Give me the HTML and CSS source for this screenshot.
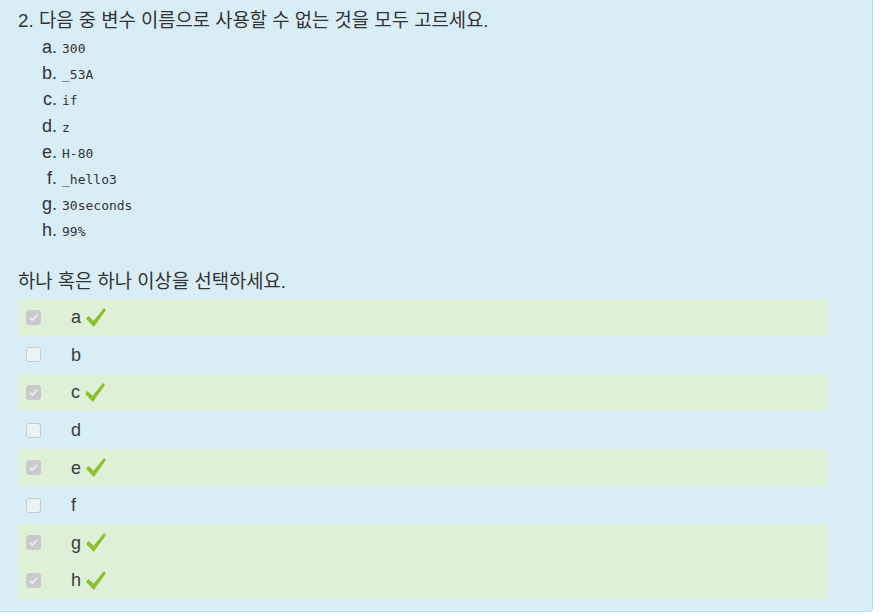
FILE: index.html
```html
<!DOCTYPE html>
<html lang="ko">
<head>
<meta charset="utf-8">
<title>Question 2</title>
<link rel="stylesheet" href="styles.css">
</head>
<body>
<div class="que">
  <div class="qtext">
    <p class="qline">2. 다음 중 변수 이름으로 사용할 수 없는 것을 모두 고르세요.</p>
    <ol class="opts">
      <li><code>300</code></li>
      <li><code>_53A</code></li>
      <li><code>if</code></li>
      <li><code>z</code></li>
      <li><code>H-80</code></li>
      <li><code>_hello3</code></li>
      <li><code>30seconds</code></li>
      <li><code>99%</code></li>
    </ol>
  </div>
  <div class="prompt">하나 혹은 하나 이상을 선택하세요.</div>
  <div class="answer">
    <div class="row correct"><span class="cb on"><svg viewBox="0 0 16 16"><path d="M3.5 8.2 L6.6 11.2 L12.5 4.8" /></svg></span><span class="lbl">a</span><svg class="tick" viewBox="0 0 20 20"><path d="M0 11.2 L2.6 8.6 L7.6 13.2 L18 0.6 L20 2.6 L7.8 19.4 Z"/></svg></div>
    <div class="row"><span class="cb"></span><span class="lbl">b</span></div>
    <div class="row correct"><span class="cb on"><svg viewBox="0 0 16 16"><path d="M3.5 8.2 L6.6 11.2 L12.5 4.8" /></svg></span><span class="lbl">c</span><svg class="tick" viewBox="0 0 20 20"><path d="M0 11.2 L2.6 8.6 L7.6 13.2 L18 0.6 L20 2.6 L7.8 19.4 Z"/></svg></div>
    <div class="row"><span class="cb"></span><span class="lbl">d</span></div>
    <div class="row correct"><span class="cb on"><svg viewBox="0 0 16 16"><path d="M3.5 8.2 L6.6 11.2 L12.5 4.8" /></svg></span><span class="lbl">e</span><svg class="tick" viewBox="0 0 20 20"><path d="M0 11.2 L2.6 8.6 L7.6 13.2 L18 0.6 L20 2.6 L7.8 19.4 Z"/></svg></div>
    <div class="row"><span class="cb"></span><span class="lbl">f</span></div>
    <div class="row correct"><span class="cb on"><svg viewBox="0 0 16 16"><path d="M3.5 8.2 L6.6 11.2 L12.5 4.8" /></svg></span><span class="lbl">g</span><svg class="tick" viewBox="0 0 20 20"><path d="M0 11.2 L2.6 8.6 L7.6 13.2 L18 0.6 L20 2.6 L7.8 19.4 Z"/></svg></div>
    <div class="row correct"><span class="cb on"><svg viewBox="0 0 16 16"><path d="M3.5 8.2 L6.6 11.2 L12.5 4.8" /></svg></span><span class="lbl">h</span><svg class="tick" viewBox="0 0 20 20"><path d="M0 11.2 L2.6 8.6 L7.6 13.2 L18 0.6 L20 2.6 L7.8 19.4 Z"/></svg></div>
  </div>
</div>
</body>
</html>
```

FILE: styles.css
```css
html, body {
  margin: 0;
  padding: 0;
  background: #ffffff;
}
body {
  font-family: "Liberation Sans", Arial, "Noto Sans CJK KR", sans-serif;
  font-size: 18px;
  color: #333333;
}
.que {
  box-sizing: border-box;
  width: 873px;
  height: 612px;
  background: #d9edf7;
  border-right: 1px solid #b3e0ef;
  border-bottom: 1px solid #b3e0ef;
  border-bottom-right-radius: 4px;
  padding: 0 0 0 18px;
  display: flex;
  flex-direction: column;
}
.qtext {
  padding-top: 8px;
}
.qline {
  margin: 0;
  font-size: 18.8px;
  line-height: 26px;
}
.opts {
  list-style-type: lower-alpha;
  margin: 0;
  padding: 0 0 0 44px;
}
.opts li {
  line-height: 26.2px;
  height: 26.2px;
}
.opts code {
  font-family: "DejaVu Sans Mono", monospace;
  font-size: 13px;
  line-height: 1;
}
.prompt {
  margin-top: 25px;
  font-size: 18.8px;
  line-height: 26px;
}
.answer {
  margin-top: 4px;
  width: 810px;
}
.row {
  height: 37.6px;
  display: flex;
  align-items: center;
  padding-left: 8px;
}
.row.correct {
  background: #dff0d8;
}
.cb {
  width: 15px;
  height: 15px;
  box-sizing: border-box;
  border: 1px solid #c9cccf;
  border-radius: 3px;
  background: #edf2f5;
  margin-right: 30px;
  display: flex;
  align-items: center;
  justify-content: center;
}
.cb.on {
  background: #c9cacb;
  border-color: #c9cacb;
}
.cb svg {
  width: 13px;
  height: 13px;
  fill: none;
  stroke: #eeeeee;
  stroke-width: 2;
}
.lbl {
  line-height: 20px;
  color: #3a3d42;
}
.tick {
  width: 20px;
  height: 21px;
  margin-left: 5px;
  fill: #8cc12c;
}
```
